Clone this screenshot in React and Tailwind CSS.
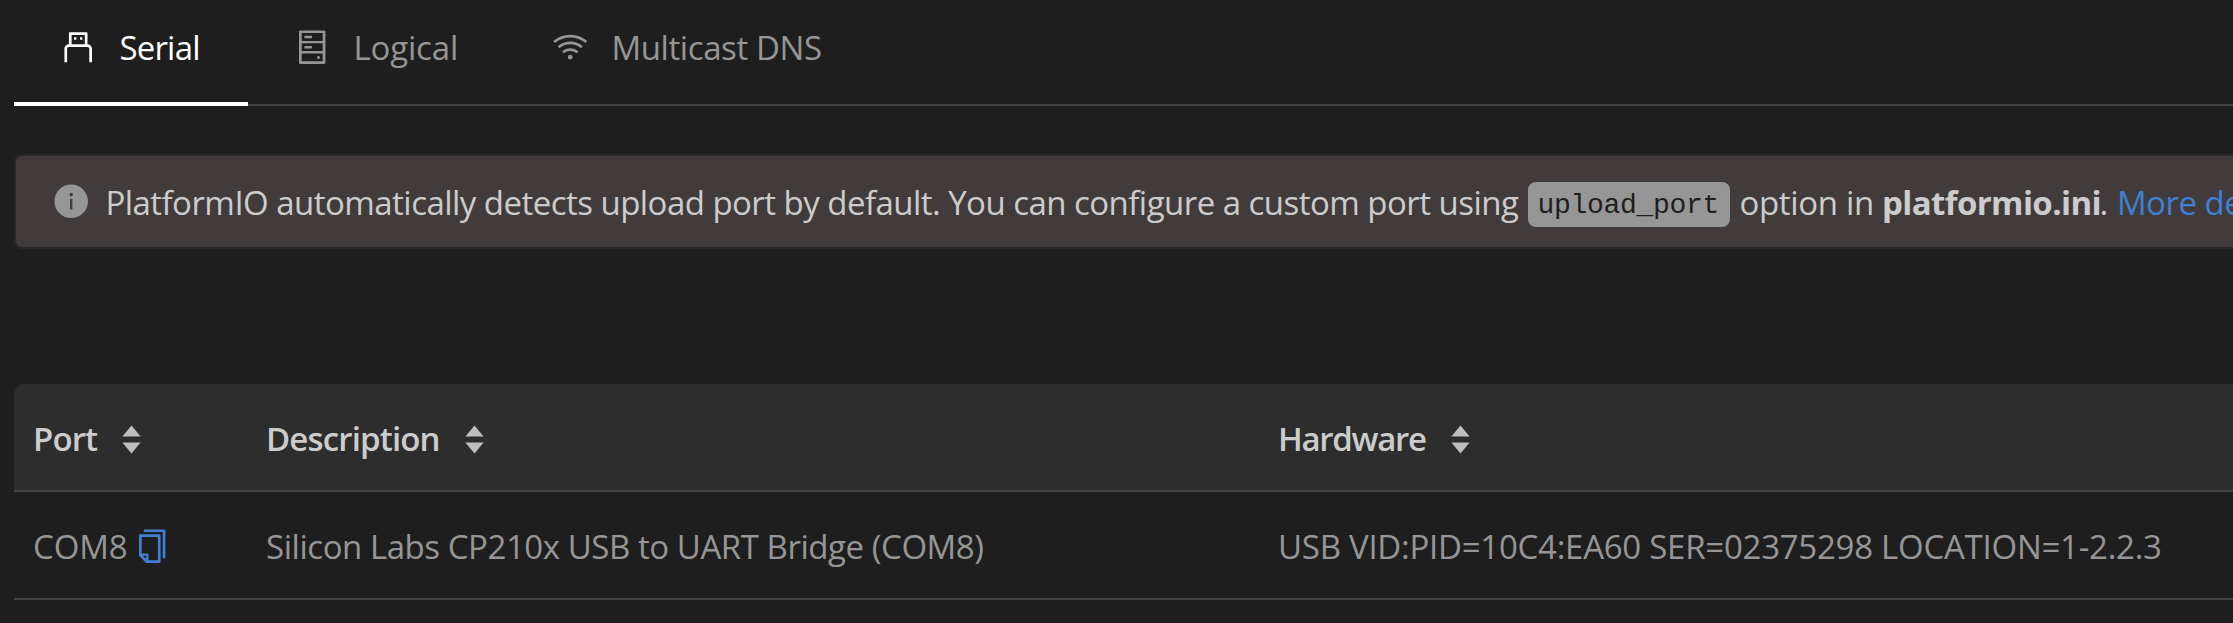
import React from "react";
import {
  AiOutlineUsb,
  AiOutlineHdd,
  AiOutlineWifi,
  AiFillInfoCircle,
  AiOutlineCopy,
} from "react-icons/ai";

function Tab({ icon: Icon, label, active, className }) {
  return (
    <button
      className={`flex items-center pl-[45px] whitespace-nowrap ${
        active ? "border-b-4 border-white pb-[7px] text-white" : "pb-[11px] text-[#969696]"
      } ${className}`}
    >
      <Icon className="size-[38.4px] shrink-0" />
      <span>{label}</span>
    </button>
  );
}

function Sorter() {
  return (
    <svg className="ml-[25px] h-[29px] w-[19px] shrink-0" viewBox="0 0 19 29" fill="#bfbfbf">
      <path d="M9.5 0.4 18.6 11.6H0.4Z" />
      <path d="M9.5 28.6 18.6 17.4H0.4Z" />
    </svg>
  );
}

function HeaderCell({ children, className }) {
  return (
    <div className={`flex items-center pt-1 pl-[19px] font-semibold text-[#cccccc] ${className}`}>
      <span>{children}</span>
      <Sorter />
    </div>
  );
}

export default function App() {
  return (
    <div className="h-[623px] w-full overflow-hidden bg-[#1e1e1e] pl-3.5 font-['Open_Sans',sans-serif] text-[33px] leading-[48px]">
      <nav className="flex h-[106px] bg-[linear-gradient(#414141,#414141)] bg-[length:100%_2px] bg-bottom bg-no-repeat">
        <Tab
          icon={AiOutlineUsb}
          label="Serial"
          active
          className="w-[234px] gap-[22px] tracking-[-0.8px]"
        />
        <Tab
          icon={AiOutlineHdd}
          label="Logical"
          className="w-[258px] gap-[22px] tracking-[-0.15px]"
        />
        <Tab
          icon={AiOutlineWifi}
          label="Multicast DNS"
          className="gap-[22px] tracking-[-0.4px]"
        />
      </nav>

      <div className="mt-12 flex h-[95px] w-[2400px] items-center rounded-lg border-2 border-[#292727] bg-[#413c3b] pl-9 whitespace-nowrap text-[#cccccc]">
        <AiFillInfoCircle className="size-[38.4px] shrink-0 text-[#969696]" />
        <div className="flex items-center pt-[3px] pl-[15px]">
          <span className="w-[1422.5px] tracking-[-0.535px]">
            PlatformIO automatically detects upload port by default. You can configure a custom port using
          </span>
          <code className="mt-0.5 h-[45px] w-[202px] rounded-lg bg-[#969696] pl-[9.5px] font-['Liberation_Mono',monospace] text-[28px] leading-[48px] tracking-[-0.3px] text-[#1e1e1e]">
            upload_port
          </code>
          <span className="w-[152px] pl-[9.5px] tracking-[-0.33px]">option in</span>
          <b className="w-[217.5px] font-bold tracking-[-0.6px]">platformio.ini</b>
          <span className="w-[17.5px]">.</span>
          <a className="tracking-[-0.5px] text-[#3f7fd4]">More details</a>
        </div>
      </div>

      <div className="mt-[135px] w-[2400px]">
        <div className="flex h-[108px] rounded-tl-[10px] border-b-2 border-[#414141] bg-[#2d2d2d]">
          <HeaderCell className="w-[233px] tracking-[-0.9px]">Port</HeaderCell>
          <HeaderCell className="w-[1012px] tracking-[-0.85px]">Description</HeaderCell>
          <HeaderCell className="tracking-[-1.3px]">Hardware</HeaderCell>
        </div>
        <div className="flex h-[108px] border-b-2 border-[#414141] whitespace-nowrap text-[#969696]">
          <div className="flex w-[233px] items-center pt-[3px] pl-[19px] tracking-[-0.1px]">
            COM8
            <AiOutlineCopy className="ml-[5.5px] size-[38.4px] shrink-0 text-[#3f7fd4]" />
          </div>
          <div className="flex w-[1012px] items-center pt-[3px] pl-[19px] tracking-[-0.45px]">
            Silicon Labs CP210x USB to UART Bridge (COM8)
          </div>
          <div className="flex items-center pt-[3px] pl-[19px] tracking-[-0.26px]">
            USB VID:PID=10C4:EA60 SER=02375298 LOCATION=1-2.2.3
          </div>
        </div>
      </div>
    </div>
  );
}
